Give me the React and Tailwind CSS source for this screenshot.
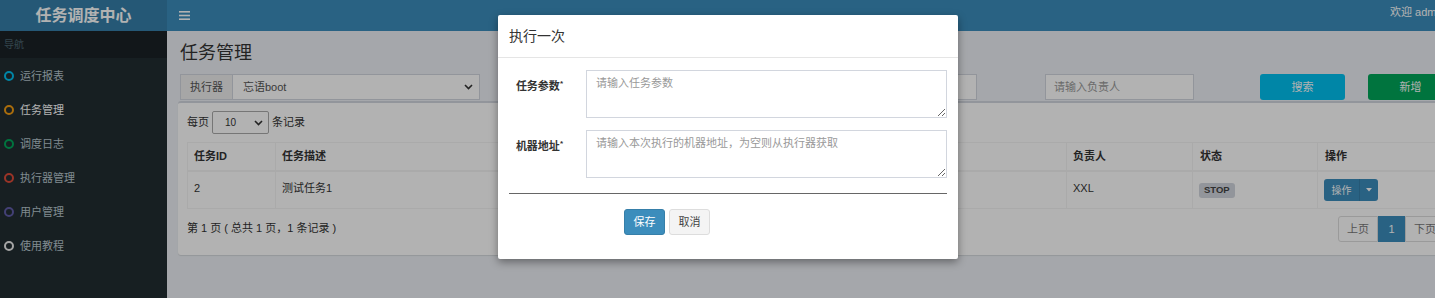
import React from "react";

const FONT = { fontFamily: '"Liberation Sans","Noto Sans CJK SC",sans-serif' };

function Ring({ color }) {
  return (
    <span
      className="inline-block w-[10px] h-[10px] rounded-full border-[2px] shrink-0"
      style={{ borderColor: color }}
    />
  );
}

const menu = [
  { t: "运行报表", c: "#00c0ef" },
  { t: "任务管理", c: "#f39c12", active: true },
  { t: "调度日志", c: "#00a65a" },
  { t: "执行器管理", c: "#dd4b39" },
  { t: "用户管理", c: "#605ca8" },
  { t: "使用教程", c: "#eeeeee" },
];

function Caret() {
  return (
    <svg width="9" height="6" viewBox="0 0 9 6" className="shrink-0">
      <path d="M1 1 L4.5 4.5 L8 1" stroke="#333" strokeWidth="1.6" fill="none" />
    </svg>
  );
}

export default function App() {
  return (
    <div className="relative w-[1435px] h-[298px] overflow-hidden bg-[#ecf0f5]" style={FONT}>
      <div className="w-[1470px] h-[298px] flex flex-col">
        {/* header */}
        <div className="flex h-[31px] shrink-0">
          <div className="w-[167px] bg-[#367fa9] flex items-center justify-center text-white font-bold text-[16px]">
            任务调度中心
          </div>
          <div className="flex-1 bg-[#3c8dbc] flex items-center pl-[12px] pr-[25px]">
            <svg width="11" height="9" viewBox="0 0 11 9">
              <rect x="0" y="0" width="11" height="1.6" fill="#fff" />
              <rect x="0" y="3.7" width="11" height="1.6" fill="#fff" />
              <rect x="0" y="7.4" width="11" height="1.6" fill="#fff" />
            </svg>
            <span className="ml-auto text-white text-[11px] -mt-[6px]">欢迎 admin</span>
          </div>
        </div>
        <div className="flex flex-1">
          {/* sidebar */}
          <div className="w-[167px] bg-[#222d32] shrink-0">
            <div className="h-[27px] bg-[#1a2226] text-[#4b646f] text-[10px] flex items-center pl-[4px]">导航</div>
            {menu.map((m) => (
              <div key={m.t} className="h-[34px] flex items-center gap-[6px] pl-[4px] pt-[2px]">
                <Ring color={m.c} />
                <span className={"text-[11px] " + (m.active ? "text-white" : "text-[#b8c7ce]")}>{m.t}</span>
              </div>
            ))}
          </div>
          {/* content */}
          <div className="flex-1 pl-[11px] pr-[15px]">
            <div className="h-[43px] flex items-center pl-[2px] text-[18px] text-[#333] leading-none">任务管理</div>
            <div className="flex items-center h-[26px] mt-[0px] text-[11px]">
              <div className="ml-[2px] flex w-[300px] h-[26px] border border-[#d2d6de] bg-white">
                <div className="w-[52px] bg-[#eee] border-r border-[#d2d6de] flex items-center justify-center text-[#555]">执行器</div>
                <div className="flex-1 flex items-center justify-between pl-[10px] pr-[6px] text-[#555]">
                  <span>忘语boot</span>
                  <Caret />
                </div>
              </div>
              <div className="ml-[20px] w-[477px] h-[26px] border border-[#d2d6de] bg-white" />
              <div className="ml-[68px] w-[149px] h-[26px] border border-[#d2d6de] bg-white flex items-center pl-[8px] text-[#999]">请输入负责人</div>
              <div className="ml-[66px] w-[85px] h-[26px] rounded-[3px] bg-[#00c0ef] flex items-center justify-center text-white">搜索</div>
              <div className="ml-[23px] w-[85px] h-[26px] rounded-[3px] bg-[#00a65a] flex items-center justify-center text-white">新增</div>
            </div>
            {/* box */}
            <div className="mt-[1px] bg-white border-t-[2px] border-[#d2d6de] rounded-[3px] shadow-[0_1px_1px_rgba(0,0,0,0.1)] px-[9px] pb-[13px] text-[11px] text-[#333]">
              <div className="flex items-center h-[23px] mt-[8px] gap-[3px]">
                <span>每页</span>
                <div className="w-[57px] h-[23px] border border-[#aaa] rounded-[2px] flex items-center justify-between pl-[12px] pr-[5px] text-[10px]">
                  <span>10</span>
                  <Caret />
                </div>
                <span>条记录</span>
              </div>
              <div className="mt-[8px] border border-[#f4f4f4]">
                <div className="flex h-[29px] font-bold border-b-2 border-[#f4f4f4]">
                  <div className="w-[88px] flex items-center pl-[6px] border-r border-[#f4f4f4]">任务ID</div>
                  <div className="w-[280px] flex items-center pl-[6px] border-r border-[#f4f4f4]">任务描述</div>
                  <div className="w-[200px] flex items-center pl-[6px] border-r border-[#f4f4f4]">Cron</div>
                  <div className="w-[311px] flex items-center pl-[6px] border-r border-[#f4f4f4]">运行模式</div>
                  <div className="w-[126px] flex items-center pl-[6px] border-r border-[#f4f4f4]">负责人</div>
                  <div className="w-[125px] flex items-center pl-[7px] border-r border-[#f4f4f4]">状态</div>
                  <div className="flex-1 flex items-center pl-[7px]">操作</div>
                </div>
                <div className="flex h-[36px]">
                  <div className="w-[88px] pt-[8px] pl-[6px] border-r border-[#f4f4f4]">2</div>
                  <div className="w-[280px] pt-[8px] pl-[6px] border-r border-[#f4f4f4]">测试任务1</div>
                  <div className="w-[200px] pt-[8px] pl-[6px] border-r border-[#f4f4f4]">0 0 0 * * ? *</div>
                  <div className="w-[311px] pt-[8px] pl-[6px] border-r border-[#f4f4f4]">BEAN：demoJobHandler</div>
                  <div className="w-[126px] pt-[8px] pl-[6px] border-r border-[#f4f4f4]">XXL</div>
                  <div className="w-[125px] pt-[9px] pl-[6px] border-r border-[#f4f4f4]">
                    <span className="inline-flex items-center h-[15px] px-[5px] rounded-[3px] bg-[#d2d6de] text-[#444] text-[9.5px] font-bold">STOP</span>
                  </div>
                  <div className="flex-1 pt-[7px] pl-[6px]">
                    <div className="inline-flex h-[22px] rounded-[3px] bg-[#3c8dbc] text-white text-[10px] overflow-hidden">
                      <span className="w-[36px] flex items-center justify-center border-r border-[#367fa9]">操作</span>
                      <span className="w-[18px] flex items-center justify-center">
                        <svg width="6" height="4" viewBox="0 0 6 4"><path d="M0 0 L6 0 L3 3.5 Z" fill="#fff" /></svg>
                      </span>
                    </div>
                  </div>
                </div>
              </div>
              <div className="flex items-center justify-between mt-[7px] h-[26px]">
                <span className="-mt-[1px]">第 1 页 ( 总共 1 页，1 条记录 )</span>
                <div className="flex h-[26px] mr-[1px]">
                  <span className="w-[40px] flex items-center justify-center border border-[#ddd] rounded-l-[3px] text-[#777]">上页</span>
                  <span className="w-[27px] flex items-center justify-center bg-[#3c8dbc] text-white">1</span>
                  <span className="w-[40px] flex items-center justify-center border border-[#ddd] rounded-r-[3px] text-[#777]">下页</span>
                </div>
              </div>
            </div>
          </div>
        </div>
      </div>

      {/* backdrop */}
      <div className="absolute inset-0 bg-black/30" />

      {/* modal */}
      <div className="absolute left-[498px] top-[15px] w-[460px] h-[244px] bg-white rounded-[2px] shadow-[0_3px_9px_rgba(0,0,0,0.4)] text-[#333]">
        <div className="h-[43px] border-b border-[#e5e5e5] flex items-center pl-[11px] text-[14px]">执行一次</div>
        <div className="px-[11px] pt-[12px]">
          <div className="flex items-start h-[60px]">
            <label className="w-[77px] text-right pr-[23px] pt-[8px] text-[11px] font-bold">任务参数<sup className="text-[8px]">*</sup></label>
            <textarea
              className="w-[361px] h-[48px] border border-[#d2d6de] px-[9px] py-[4px] text-[11px] placeholder:text-[#999] outline-none"
              placeholder="请输入任务参数"
            />
          </div>
          <div className="flex items-start h-[60px]">
            <label className="w-[77px] text-right pr-[23px] pt-[8px] text-[11px] font-bold">机器地址<sup className="text-[8px]">*</sup></label>
            <textarea
              className="w-[361px] h-[48px] border border-[#d2d6de] px-[9px] py-[4px] text-[11px] placeholder:text-[#999] outline-none"
              placeholder="请输入本次执行的机器地址，为空则从执行器获取"
            />
          </div>
          <div className="h-[1px] bg-[#666] mt-[3px]" />
          <div className="flex gap-[4px] pl-[115px] mt-[15px]">
            <span className="w-[41px] h-[26px] flex items-center justify-center rounded-[3px] bg-[#3c8dbc] border border-[#367fa9] text-white text-[11px]">保存</span>
            <span className="w-[41px] h-[26px] flex items-center justify-center rounded-[3px] bg-[#f4f4f4] border border-[#ddd] text-[#444] text-[11px]">取消</span>
          </div>
        </div>
      </div>
    </div>
  );
}
